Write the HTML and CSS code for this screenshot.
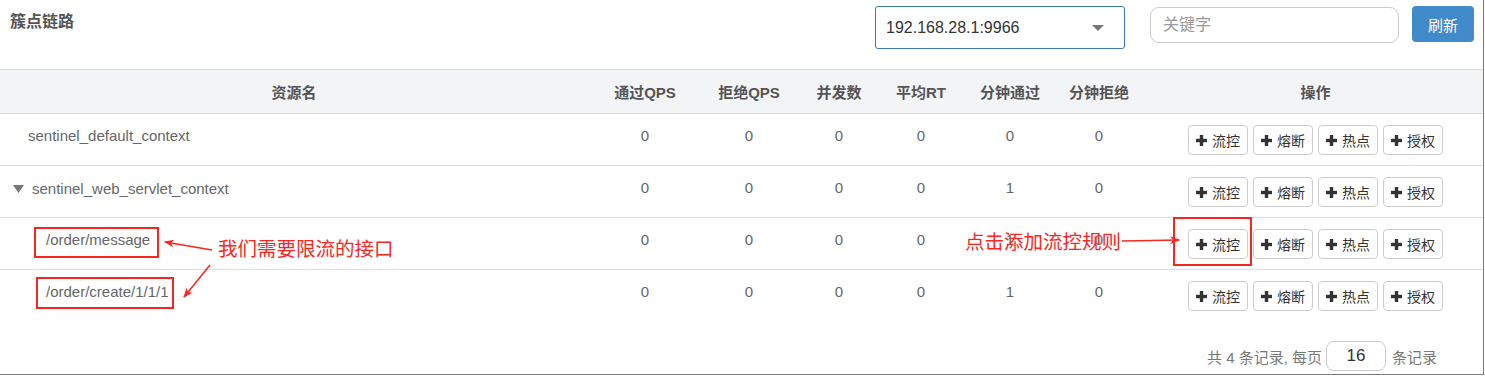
FILE: index.html
```html
<!DOCTYPE html>
<html lang="zh-CN">
<head>
  <meta charset="UTF-8">
  <title>簇点链路</title>
  <link rel="stylesheet" href="styles.css">
</head>
<body>
  <div class="page">
    <div class="toolbar">
      <div class="page-title">簇点链路</div>
      <div class="machine-select">
        <span>192.168.28.1:9966</span>
        <i class="caret"></i>
      </div>
      <div class="search-input">关键字</div>
      <button class="btn-refresh">刷新</button>
    </div>

    <table class="resource-table">
      <colgroup>
        <col style="width:588px">
        <col style="width:114px">
        <col style="width:94px">
        <col style="width:86px">
        <col style="width:78px">
        <col style="width:100px">
        <col style="width:78px">
        <col>
      </colgroup>
      <thead>
        <tr>
          <th>资源名</th>
          <th>通过QPS</th>
          <th>拒绝QPS</th>
          <th>并发数</th>
          <th>平均RT</th>
          <th>分钟通过</th>
          <th>分钟拒绝</th>
          <th class="th-ops">操作</th>
        </tr>
      </thead>
      <tbody id="rows"></tbody>
    </table>

    <div class="pager">
      <span>共 4 条记录, 每页</span>
      <div class="page-size">16</div>
      <span>条记录</span>
    </div>

    <!-- 截图上的红色标注 -->
    <div class="annotations">
      <svg width="1485" height="376" viewBox="0 0 1485 376">
        <defs>
          <marker id="head" markerWidth="10" markerHeight="8" refX="9" refY="4" orient="auto" markerUnits="userSpaceOnUse">
            <path d="M0,0 L10,4 L0,8 L3,4 z" fill="#f5271f"/>
          </marker>
        </defs>
        <rect x="35" y="228" width="123" height="29" fill="none" stroke="#f5271f" stroke-width="2"/>
        <rect x="37" y="278" width="136" height="30" fill="none" stroke="#f5271f" stroke-width="2"/>
        <rect x="1174" y="218" width="77" height="47" fill="none" stroke="#f5271f" stroke-width="2"/>
        <line x1="212" y1="250" x2="165" y2="242" stroke="#f5271f" stroke-width="1.6" marker-end="url(#head)"/>
        <line x1="210" y1="265" x2="184" y2="297" stroke="#f5271f" stroke-width="1.6" marker-end="url(#head)"/>
        <line x1="1122" y1="241" x2="1179" y2="240" stroke="#f5271f" stroke-width="1.6" marker-end="url(#head)"/>
      </svg>
      <span class="note note-api">我们需要限流的接口</span>
      <span class="note note-click">点击添加流控规则</span>
    </div>
  </div>

  <script>
  const resources = [
    { name: 'sentinel_default_context', level: 0, leaf: true, v: [0, 0, 0, 0, 0, 0] },
    { name: 'sentinel_web_servlet_context', level: 0, leaf: false, v: [0, 0, 0, 0, 1, 0] },
    { name: '/order/message', level: 1, leaf: true, v: [0, 0, 0, 0, 1, 0] },
    { name: '/order/create/1/1/1', level: 1, leaf: true, v: [0, 0, 0, 0, 1, 0] }
  ];
  const plus = '<svg class="plus" width="11" height="11" viewBox="0 0 11 11"><rect x="0" y="3.8" width="11" height="3.4"/><rect x="3.8" y="0" width="3.4" height="11"/></svg>';
  const ops = ['流控', '熔断', '热点', '授权'];

  const tbody = document.getElementById('rows');
  resources.forEach(r => {
    const tr = document.createElement('tr');
    let name = '';
    if (r.leaf) {
      name = `<span class="res-name level-${r.level}">${r.name}</span>`;
    } else {
      name = `<span class="res-name node"><svg class="tree-caret" width="11" height="8" viewBox="0 0 11 8"><path d="M0,0 L11,0 L5.5,8 z"/></svg>${r.name}</span>`;
    }
    tr.innerHTML = `<td>${name}</td>` +
      r.v.map(x => `<td class="num">${x}</td>`).join('') +
      `<td class="ops">${ops.map(o => `<button class="btn-op">${plus}${o}</button>`).join('')}</td>`;
    tbody.appendChild(tr);
  });
  </script>
</body>
</html>
```

FILE: styles.css
```css
body {
  margin: 0;
  font-family: 'Liberation Sans', 'Noto Sans CJK SC', sans-serif;
  background-color: #fff;
  color: #666;
}
.page {
  position: relative;
  box-sizing: border-box;
  width: 1484px;
  height: 375px;
  border-right: 1px solid #7a7a7a;
  border-bottom: 1px solid #7a7a7a;
  overflow: hidden;
}
.toolbar {
  display: flex;
  align-items: flex-start;
  height: 69px;
  box-sizing: border-box;
  padding: 6px 9px 0 10px;
}
.page-title {
  flex-grow: 1;
  margin-top: 2px;
  font-size: 16px;
  font-weight: bold;
  color: #555;
}
.machine-select {
  display: flex;
  align-items: center;
  justify-content: space-between;
  box-sizing: border-box;
  width: 250px;
  height: 43px;
  padding: 0 20px 0 10px;
  margin-right: 25px;
  border: 1px solid #3a78b5;
  border-radius: 3px;
  font-size: 16px;
  color: #333;
}
.caret {
  width: 0;
  height: 0;
  border-left: 6px solid transparent;
  border-right: 6px solid transparent;
  border-top: 6px solid #777;
}
.search-input {
  box-sizing: border-box;
  width: 249px;
  height: 36px;
  margin-top: 1px;
  margin-right: 13px;
  padding: 6px 12px;
  border: 1px solid #ccc;
  border-radius: 9px;
  font-size: 16px;
  line-height: 22px;
  color: #999;
}
.btn-refresh {
  width: 62px;
  height: 36px;
  padding: 0;
  border: none;
  border-radius: 4px;
  background-color: #428bca;
  color: #fff;
  font-family: inherit;
  font-size: 15px;
}
.resource-table {
  width: 1483px;
  table-layout: fixed;
  border-collapse: collapse;
}
.resource-table th {
  height: 44px;
  box-sizing: border-box;
  padding: 0;
  background-color: #f3f4f6;
  border-top: 1px solid #dcdcdc;
  font-size: 15px;
  font-weight: bold;
  color: #555;
  text-align: center;
}
.resource-table th.th-ops {
  padding-left: 10px;
}
.resource-table td {
  vertical-align: top;
  padding: 11px 0 10px;
  border-top: 1px solid #dcdcdc;
  font-size: 15px;
  line-height: 22px;
  color: #666;
}
.resource-table td.num {
  text-align: center;
}
.res-name {
  display: inline-flex;
  align-items: center;
  padding-left: 28px;
}
.res-name.node {
  padding-left: 13px;
}
.res-name.level-1 {
  padding-left: 46px;
}
.tree-caret {
  fill: #777;
  margin-right: 8px;
}
.resource-table td.ops {
  padding-left: 50px;
  line-height: 0;
}
.btn-op {
  display: inline-flex;
  align-items: center;
  box-sizing: border-box;
  width: 60px;
  height: 30px;
  margin-right: 5px;
  padding: 0 0 0 7px;
  border: 1px solid #ccc;
  border-radius: 4px;
  background-color: #fff;
  font-family: inherit;
  font-size: 14px;
  color: #333;
}
.btn-op .plus {
  fill: #333;
  margin-right: 5px;
}
.pager {
  display: flex;
  justify-content: flex-end;
  align-items: center;
  margin-top: 20px;
  padding-right: 46px;
  font-size: 15px;
  color: #777;
}
.page-size {
  box-sizing: border-box;
  width: 60px;
  height: 30px;
  margin: 0 6px 0 4px;
  border: 1px solid #ccc;
  border-radius: 8px;
  font-size: 17px;
  line-height: 28px;
  text-align: center;
  color: #333;
}
.annotations {
  position: absolute;
  top: 0;
  left: 0;
  width: 1485px;
  height: 376px;
  pointer-events: none;
}
.annotations svg {
  position: absolute;
  top: 0;
  left: 0;
}
.note {
  position: absolute;
  font-size: 19.5px;
  line-height: 24px;
  color: #f5271f;
  white-space: nowrap;
}
.note-api {
  left: 218px;
  top: 237px;
}
.note-click {
  left: 965px;
  top: 230px;
}
```
